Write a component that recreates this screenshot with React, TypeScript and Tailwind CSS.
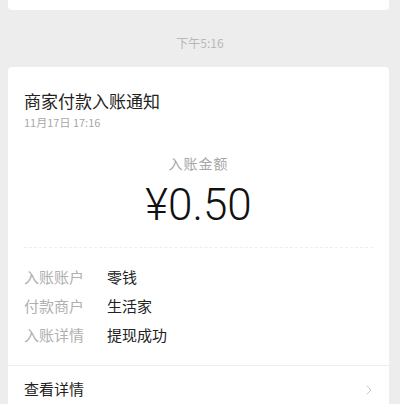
import { ChevronRight } from "lucide-react";

const rows = [
  { label: "入账账户", value: "零钱" },
  { label: "付款商户", value: "生活家" },
  { label: "入账详情", value: "提现成功" },
];

const cjk = "font-['Noto_Sans_CJK_SC','Noto_Sans',sans-serif]";

export default function App() {
  return (
    <div className={`h-[404px] w-[400px] overflow-hidden bg-[#ededed] ${cjk}`}>
      {/* previous message card, cut off at top */}
      <div className="ml-[8px] h-[10px] w-[381px] rounded-b-[4px] bg-white" />

      <div className="flex h-[57px] items-center justify-center pt-[8px] text-[12px] text-[#b8b8b8]">
        下午5:16
      </div>

      <div className="ml-[8px] w-[381px] rounded-[4px] bg-white">
        <div className="px-[16px] pt-[22px]">
          <h1 className="text-[17px] leading-[24px] text-[#222]">商家付款入账通知</h1>
          <p className="mt-[1px] text-[11px] leading-[16px] text-[#a8a8a8]">11月17日 17:16</p>

          <div className="mt-[23px] text-center text-[14px] leading-[20px] tracking-[1px] text-[#a6a6a6]">入账金额</div>
          <div className="mt-[7px] text-center font-['Roboto','Liberation_Sans',sans-serif] text-[44px] font-light leading-[50px] text-[#111]">
            ¥0.50
          </div>

          <div className="mt-[17px] border-t border-dashed border-[#eeeeee]" />

          <div className="flex flex-col gap-[9px] pt-[19px] pb-[20px]">
            {rows.map((row) => (
              <div className="flex text-[15px] leading-[20px]" key={row.label}>
                <span className="w-[83px] text-[#b0b0b0]">{row.label}</span>
                <span className="text-[#222]">{row.value}</span>
              </div>
            ))}
          </div>
        </div>

        <div className="flex h-[48px] items-center justify-between border-t border-[#ececec] px-[16px]">
          <span className="text-[15px] text-[#222]">查看详情</span>
          <ChevronRight className="mr-[-4px] h-[16px] w-[16px] text-[#c8c8c8]" strokeWidth={1.5} />
        </div>
      </div>
    </div>
  );
}
